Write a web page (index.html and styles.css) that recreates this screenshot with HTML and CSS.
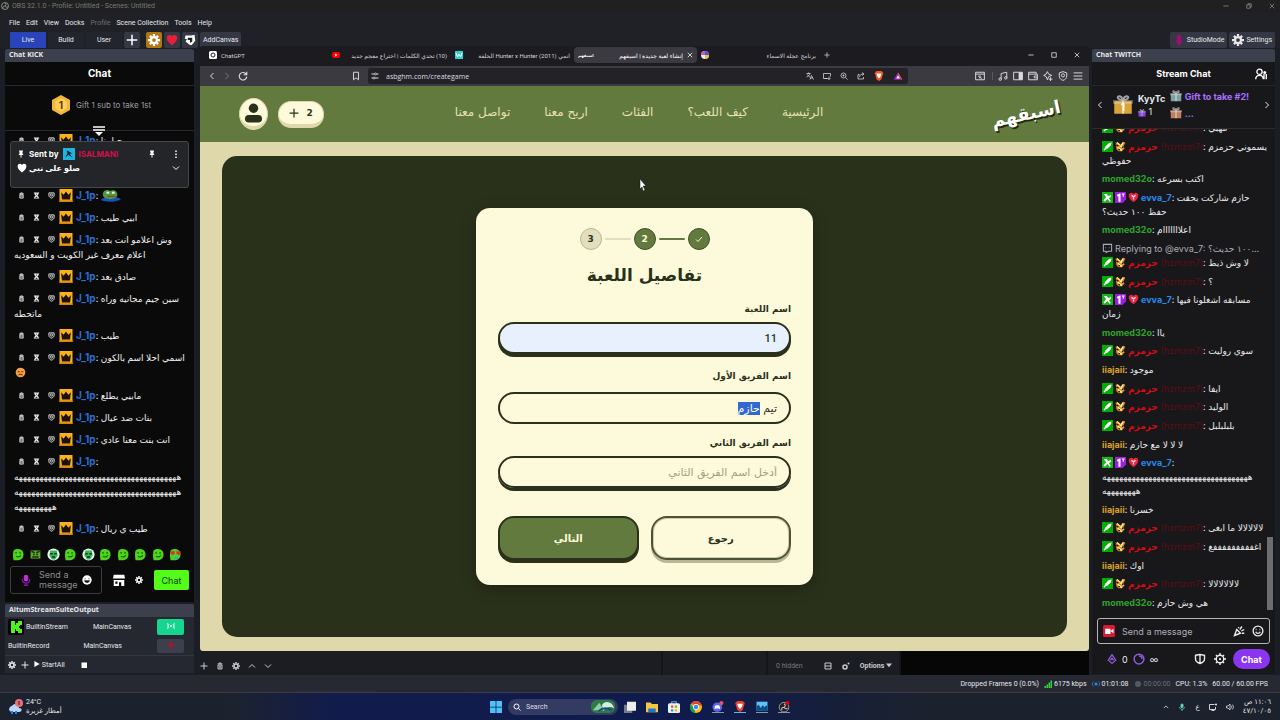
FILE: index.html
```html
<!DOCTYPE html>
<html lang="en">
<head>
    <meta charset="UTF-8">
    <meta name="viewport" content="width=device-width, initial-scale=1.0">
    <title>OBS 32.1.0 - Profile: Untitled - Scenes: Untitled</title>
    <link rel="stylesheet" href="styles.css">
</head>
<body>
    <!-- Shared icons -->
    <svg class="sprite" aria-hidden="true">
        <symbol id="i-trash" viewBox="0 0 16 16"><path d="M3 4h10M6 4V2h4v2M4 6h8v8H4zM6.500 7v6M9.500 7v6" fill="none" stroke="currentColor" stroke-width="1.800"/></symbol>
        <symbol id="i-glass" viewBox="0 0 16 16"><path d="M2 1h12v2h-1c0 3-2 4-3 5 1 1 3 2 3 5h1v2H2v-2h1c0-3 2-4 3-5-1-1-3-2-3-5H2zM6 4l2 2 2-2zM5 13h6L8 10z" fill="currentColor" fill-rule="evenodd"/></symbol>
        <symbol id="i-ban" viewBox="0 0 16 16"><path d="M2 2h12v6c0 3-3 5-6 6-3-1-6-3-6-6z" fill="none" stroke="currentColor" stroke-width="2"/><circle cx="8" cy="7" r="3" fill="none" stroke="currentColor" stroke-width="1.500"/><path d="M6 5l4 4" stroke="currentColor" stroke-width="1.500"/></symbol>
        <symbol id="i-crown" viewBox="0 0 16 16"><path d="M0 0h16v16H0z" fill="#f9b21c"/><path d="M0 14h16v2H0z" fill="#d98408"/><path d="M2 4l3 3 3-4 3 4 3-3-1 9H3z" fill="#1c1200"/></symbol>
        <symbol id="i-sword" viewBox="0 0 16 16"><path d="M0 0h16v16H0z" fill="#00ad03"/><path d="M14 2l-1 4-6 6-1-1-2 3-2-2 3-2-1-1 6-6z" fill="#fff"/></symbol>
        <symbol id="i-mod" viewBox="0 0 16 16"><path d="M0 0h16v16H0z" fill="#14b517"/><path d="M3 3h4l2 3 4-2v3l-3 2 3 4-2 1-3-4-4 4-2-2 4-4z" fill="#fff"/></symbol>
        <symbol id="i-bee" viewBox="0 0 16 16"><path d="M1 2l4 1 3 2 5-4 2 2-3 5 2 3-4 4H5l-3-3z" fill="#d98a20"/><path d="M3 2l4 4M12 2l-3 5M4 9l6 5M7 7l5 4" stroke="#fff0a0" stroke-width="2"/><path d="M2 6l3 1M10 9l2 1M5 12l2 1" stroke="#29120a" stroke-width="2"/></symbol>
        <symbol id="i-first" viewBox="0 0 16 16"><path d="M0 0h16v11l-5 5H0z" fill="#9a20dd"/><path d="M3 4l4-2h1v12H5V6H3z" fill="#fff"/><path d="M10 3h4M12 3v4" stroke="#fff" stroke-width="1.500"/></symbol>
        <symbol id="i-heart" viewBox="0 0 16 16"><path d="M8 15C3 11 1 8 1 5c0-4 5-5 7-2 2-3 7-2 7 2 0 3-2 6-7 10z" fill="currentColor"/></symbol>
        <symbol id="i-gem" viewBox="0 0 16 16"><path d="M8 15C3 11 1 8 1 5c0-4 5-5 7-2 2-3 7-2 7 2 0 3-2 6-7 10z" fill="#e32640"/><path d="M5 5l3 2 3-2M8 6v5" stroke="#ffd8dc" fill="none" stroke-width="2"/></symbol>
        <symbol id="i-gear" viewBox="0 0 16 16"><circle cx="8" cy="8" r="4" fill="none" stroke="currentColor" stroke-width="3"/><path d="M8 0v3M8 13v3M0 8h3M13 8h3M2.500 2.500l2 2M11.500 11.500l2 2M13.500 2.500l-2 2M4.500 11.500l-2 2" stroke="currentColor" stroke-width="3"/></symbol>
        <symbol id="i-plus" viewBox="0 0 16 16"><path d="M8 1v14M1 8h14" stroke="currentColor" stroke-width="2"/></symbol>
        <symbol id="i-x" viewBox="0 0 16 16"><path d="M2 2l12 12M14 2L2 14" stroke="currentColor" stroke-width="2"/></symbol>
        <symbol id="i-min" viewBox="0 0 16 16"><path d="M1 8h14" stroke="currentColor" stroke-width="2"/></symbol>
        <symbol id="i-max" viewBox="0 0 16 16"><path d="M2 2h12v12H2z" fill="none" stroke="currentColor" stroke-width="2"/></symbol>
        <symbol id="i-restore" viewBox="0 0 16 16"><path d="M2 5h9v9H2zM5 5V2h9v9h-3" fill="none" stroke="currentColor" stroke-width="2"/></symbol>
        <symbol id="i-left" viewBox="0 0 16 16"><path d="M11 2L5 8l6 6" fill="none" stroke="currentColor" stroke-width="2"/></symbol>
        <symbol id="i-right" viewBox="0 0 16 16"><path d="M5 2l6 6-6 6" fill="none" stroke="currentColor" stroke-width="2"/></symbol>
        <symbol id="i-up" viewBox="0 0 16 16"><path d="M2 11l6-6 6 6" fill="none" stroke="currentColor" stroke-width="2"/></symbol>
        <symbol id="i-down" viewBox="0 0 16 16"><path d="M2 5l6 6 6-6" fill="none" stroke="currentColor" stroke-width="2"/></symbol>
        <symbol id="i-pin" viewBox="0 0 16 16"><path d="M4 1h8v2h-1v4l2 3H9v5H7v-5H3l2-3V3H4z" fill="currentColor"/></symbol>
        <symbol id="i-smile" viewBox="0 0 16 16"><circle cx="8" cy="8" r="6.500" fill="none" stroke="currentColor" stroke-width="1.800"/><path d="M5 6h1M10 6h1M5 9c1 3 5 3 6 0" fill="none" stroke="currentColor" stroke-width="1.800"/></symbol>
        <symbol id="i-blob" viewBox="0 0 16 16"><path d="M2 3c4-3 11-2 12 3 1 6-3 9-7 9H2c-1-4-1-9 0-12z" fill="#4fd41c"/><path d="M4 6h2M9 6h2M5 10c2 2 4 1 6-1" stroke="#175c05" stroke-width="1.500" fill="none"/></symbol>
        <symbol id="i-blob2" viewBox="0 0 16 16"><circle cx="8" cy="8" r="7.500" fill="#e9f7ee"/><path d="M4 3h8l1 6-3 5H6L3 9z" fill="#35b857"/><path d="M4 7h3M9 7h3M6 11h4" stroke="#14301c" stroke-width="2"/></symbol>
        <symbol id="i-blob3" viewBox="0 0 16 16"><path d="M2 3h12v10H2z" fill="#5da52d"/><path d="M3 4l4 2M13 4L9 6M5 8h2M9 8h2M4 11h8" stroke="#17330c" stroke-width="1.800"/></symbol>
        <symbol id="i-gift" viewBox="0 0 16 16"><path d="M1 5h14v10H1z" fill="currentColor"/><path d="M0 4h16v3H0z" fill="#fff" fill-opacity=".3"/><path d="M8 4v11M8 4C3 4 3 1 5 1s3 3 3 3 1-3 3-3 2 3-3 3" fill="none" stroke="#fff" stroke-opacity=".6" stroke-width="1.500"/></symbol>
    </svg>

    <header class="obs-head">
        <div class="title-bar">
            <svg class="s8" viewBox="0 0 16 16"><circle cx="8" cy="8" r="7" fill="none" stroke="#aaa" stroke-width="1.500"/><path d="M8 2c3 2 2 5 0 6-3 0-5 2-4 5M8 8c2 3 4 3 6 1" fill="none" stroke="#aaa" stroke-width="1.500"/></svg>
            <span>OBS 32.1.0 - Profile: Untitled - Scenes: Untitled</span>
            <div class="win-buttons">
                <button aria-label="Minimize"><svg class="s6"><use href="#i-min"/></svg></button>
                <button aria-label="Restore"><svg class="s6"><use href="#i-restore"/></svg></button>
                <button aria-label="Close"><svg class="s6"><use href="#i-x"/></svg></button>
            </div>
        </div>
        <nav class="menu-bar">
            <button>File</button><button>Edit</button><button>View</button><button>Docks</button><button class="off">Profile</button><button>Scene Collection</button><button>Tools</button><button>Help</button>
        </nav>
        <div class="tool-bar">
            <button class="tab active">Live</button>
            <button class="tab">Build</button>
            <button class="tab">User</button>
            <button class="square" aria-label="Add"><svg class="s12"><use href="#i-plus"/></svg></button>
            <button class="square gold" aria-label="Canvas settings"><svg class="s12"><use href="#i-gear"/></svg></button>
            <button class="square red" aria-label="Support"><svg class="s12"><use href="#i-heart"/></svg></button>
            <button class="square" aria-label="Aitum"><svg class="s12" viewBox="0 0 16 16"><path d="M2 2h8l4-1 1 8-5 6-3-1-5-4 2-3-3-1z" fill="#fff"/><path d="M5 5h6v5l-3 2V8H5z" fill="#20222b"/></svg></button>
            <button class="tool">AddCanvas</button>
            <button class="tool push"><svg class="s12" viewBox="0 0 16 16"><path d="M8 0l4 5-2 2 2 3-4 6-4-6 2-3-2-2z" fill="#a30d72"/></svg>StudioMode</button>
            <button class="tool"><svg class="s12"><use href="#i-gear"/></svg>Settings</button>
        </div>
    </header>

    <main class="desk">
        <!-- Kick chat and stream outputs -->
        <aside class="left-dock">
            <section class="kick">
                <h2 class="dock-title">Chat KICK</h2>
                <h3 class="chat-title">Chat</h3>
                <div class="kick-gift">
                    <svg class="s20" viewBox="0 0 20 20"><path d="M10 0l9 5v10l-9 5-9-5V5z" fill="#f5b63a"/><path d="M10 3l6 4v6l-6 4-6-4V7z" fill="#ffd15c"/><text x="10" y="14" class="medal">1</text></svg>
                    <span>Gift 1 sub to take 1st</span>
                    <svg class="drawer" viewBox="0 0 12 10"><path d="M0 1h12M0 4h12" stroke="#fff" stroke-width="1.500"/><path d="M2 6h8l-4 4z" fill="#fff"/></svg>
                </div>
                <ul class="kick-list cut">
                    <li><svg><use href="#i-trash"/></svg><svg><use href="#i-glass"/></svg><svg><use href="#i-ban"/></svg><svg class="crown"><use href="#i-crown"/></svg><b>J_1p</b>: <bdi>حبايبنا</bdi></li>
                </ul>
                <div class="pinned">
                    <svg class="s8"><use href="#i-pin"/></svg><b>Sent by</b>
                    <svg class="s12" viewBox="0 0 16 16"><path d="M0 0h16v16H0z" fill="#1fb3e0"/><path d="M5 3l7 4-3 1 4 5-6-4-4 4 3-6z" fill="#0b2330"/></svg><b class="pin-user">ISALMANI</b>
                    <svg class="s8 push"><use href="#i-pin"/></svg>
                    <svg class="s8" viewBox="0 0 16 16"><path d="M8 1v3M8 7v3M8 13v3" stroke="#fff" stroke-width="3"/></svg>
                    <p><svg class="s10"><use href="#i-heart"/></svg> <bdi>صلو على نبي</bdi></p>
                    <svg class="s8 push"><use href="#i-down"/></svg>
                </div>
                <ul class="kick-list">
                    <li><svg><use href="#i-trash"/></svg><svg><use href="#i-glass"/></svg><svg><use href="#i-ban"/></svg><svg class="crown"><use href="#i-crown"/></svg><b>J_1p</b>: <svg class="frog" viewBox="0 0 22 14"><path d="M0 12c3-4 15-5 22-1-5 3-15 4-22 1z" fill="#1552c4"/><path d="M2 6c0-5 5-6 8-4 4-2 8 0 8 4s-5 5-8 5-8-1-8-5z" fill="#4f9a41"/><path d="M6 4h3M12 4h3" stroke="#e6f0e0" stroke-width="2"/><path d="M7 8h9" stroke="#8a4a30" stroke-width="1.500"/></svg></li>
                    <li><svg><use href="#i-trash"/></svg><svg><use href="#i-glass"/></svg><svg><use href="#i-ban"/></svg><svg class="crown"><use href="#i-crown"/></svg><b>J_1p</b>: <bdi>ابيي طيب</bdi></li>
                    <li><svg><use href="#i-trash"/></svg><svg><use href="#i-glass"/></svg><svg><use href="#i-ban"/></svg><svg class="crown"><use href="#i-crown"/></svg><b>J_1p</b>: <bdi>وش اعلامو انت بعد</bdi><br><bdi>اعلام معرف غير الكويت و السعوديه</bdi></li>
                    <li><svg><use href="#i-trash"/></svg><svg><use href="#i-glass"/></svg><svg><use href="#i-ban"/></svg><svg class="crown"><use href="#i-crown"/></svg><b>J_1p</b>: <bdi>صادق بعد</bdi></li>
                    <li><svg><use href="#i-trash"/></svg><svg><use href="#i-glass"/></svg><svg><use href="#i-ban"/></svg><svg class="crown"><use href="#i-crown"/></svg><b>J_1p</b>: <bdi>سين جيم مجانيه وراه</bdi><br><bdi>ماتحطه</bdi></li>
                    <li><svg><use href="#i-trash"/></svg><svg><use href="#i-glass"/></svg><svg><use href="#i-ban"/></svg><svg class="crown"><use href="#i-crown"/></svg><b>J_1p</b>: <bdi>طيب</bdi></li>
                    <li><svg><use href="#i-trash"/></svg><svg><use href="#i-glass"/></svg><svg><use href="#i-ban"/></svg><svg class="crown"><use href="#i-crown"/></svg><b>J_1p</b>: <bdi>اسمي احلا اسم بالكون</bdi><br><svg class="sad" viewBox="0 0 16 16"><circle cx="8" cy="8" r="7" fill="#f2a244"/><path d="M4 7h3M9 7h3M5 12c2-2 4-2 6 0" stroke="#6b2f10" stroke-width="1.500" fill="none"/></svg></li>
                    <li><svg><use href="#i-trash"/></svg><svg><use href="#i-glass"/></svg><svg><use href="#i-ban"/></svg><svg class="crown"><use href="#i-crown"/></svg><b>J_1p</b>: <bdi>مابيي يطلع</bdi></li>
                    <li><svg><use href="#i-trash"/></svg><svg><use href="#i-glass"/></svg><svg><use href="#i-ban"/></svg><svg class="crown"><use href="#i-crown"/></svg><b>J_1p</b>: <bdi>بنات ضد عيال</bdi></li>
                    <li><svg><use href="#i-trash"/></svg><svg><use href="#i-glass"/></svg><svg><use href="#i-ban"/></svg><svg class="crown"><use href="#i-crown"/></svg><b>J_1p</b>: <bdi>انت بنت معنا عادي</bdi></li>
                    <li><svg><use href="#i-trash"/></svg><svg><use href="#i-glass"/></svg><svg><use href="#i-ban"/></svg><svg class="crown"><use href="#i-crown"/></svg><b>J_1p</b>:<br><bdi>هههههههههههههههههههههههههههههههههههههههه</bdi><br><bdi>هههههههههههههههههههههههههههههههههههههههه</bdi><br><bdi>هههههههههه</bdi></li>
                    <li><svg><use href="#i-trash"/></svg><svg><use href="#i-glass"/></svg><svg><use href="#i-ban"/></svg><svg class="crown"><use href="#i-crown"/></svg><b>J_1p</b>: <bdi>طيب ي ريال</bdi></li>
                </ul>
                <div class="emotes">
                    <svg><use href="#i-blob"/></svg><svg><use href="#i-blob3"/></svg><svg><use href="#i-blob2"/></svg><svg><use href="#i-blob"/></svg><svg><use href="#i-blob2"/></svg><svg><use href="#i-blob"/></svg><svg><use href="#i-blob"/></svg><svg><use href="#i-blob"/></svg><svg><use href="#i-blob"/></svg><svg viewBox="0 0 16 16"><path d="M2 3c4-3 11-2 12 3 1 6-3 9-7 9H2c-1-4-1-9 0-12z" fill="#4fd41c"/><path d="M2 4h5v3L5 9 2 7zM9 4h5v3l-2 2-3-2z" fill="#d8303a"/><path d="M7 11h4v3H7z" fill="#35a7e0"/></svg>
                </div>
                <div class="kick-send">
                    <div class="kick-box">
                        <svg class="s12" viewBox="0 0 16 16"><rect x="5" y="1" width="6" height="9" rx="3" fill="#c02fd6"/><path d="M3 7c0 7 10 7 10 0M8 12v3M5 15h6" fill="none" stroke="#7d1a9c" stroke-width="1.800"/></svg>
                        <textarea rows="2" aria-label="Send a message" placeholder="Send a message"></textarea>
                        <svg class="s10" viewBox="0 0 16 16"><circle cx="8" cy="8" r="7.500" fill="#fff"/><path d="M4 6h2M10 6h2M4 9h8c-1 4-7 4-8 0z" fill="#111" stroke="#111"/></svg>
                    </div>
                    <svg class="s12" viewBox="0 0 16 16"><path d="M1 1h14l1 5H0zM1 8h14v8h-4v-5H8v5H1zM3 10v3h3v-3z" fill="#fff" fill-rule="evenodd"/></svg>
                    <svg class="s8"><use href="#i-gear"/></svg>
                    <button class="kick-button">Chat</button>
                </div>
            </section>
            <section class="outputs">
                <h2 class="dock-title">AitumStreamSuiteOutput</h2>
                <div class="out-row">
                    <svg class="s16" viewBox="0 0 16 16"><rect width="16" height="16" rx="2" fill="#050505"/><path d="M3 2h4v4h1V4h2V2h4v4h-2v1h-1v2h1v1h2v4h-4v-2H8v-2H7v4H3z" fill="#4df51c"/></svg>
                    <span>BuiltinStream</span><span class="canvas">MainCanvas</span>
                    <button class="on" aria-label="Stop stream"><svg class="s8" viewBox="0 0 16 16"><circle cx="8" cy="8" r="2" fill="#fff"/><path d="M4 4c-2 2-2 6 0 8M12 4c2 2 2 6 0 8M2 2c-3 3-3 9 0 12M14 2c3 3 3 9 0 12" fill="none" stroke="#fff" stroke-width="1.500"/></svg></button>
                </div>
                <div class="out-row">
                    <span class="rec">BuiltinRecord</span><span class="canvas">MainCanvas</span>
                    <button aria-label="Start recording"><svg class="s8" viewBox="0 0 16 16"><circle cx="8" cy="8" r="5" fill="#b0122a"/></svg></button>
                </div>
                <div class="out-tools">
                    <svg class="s8"><use href="#i-gear"/></svg><svg class="s8"><use href="#i-plus"/></svg>
                    <button><svg class="s6" viewBox="0 0 16 16"><path d="M1 0l14 8-14 8z" fill="#fff"/></svg> StartAll</button><svg class="s8" viewBox="0 0 16 16"><path d="M3 3h11v11H3z" fill="#fff"/></svg>
                </div>
            </section>
        </aside>

        <div class="middle">
            <section class="browser">
                <div class="tabs">
                    <div class="btab"><svg class="s8" viewBox="0 0 16 16"><rect width="16" height="16" rx="3" fill="#fff"/><circle cx="8" cy="8" r="4" fill="none" stroke="#222" stroke-width="2"/></svg><span class="en">ChatGPT</span></div>
                    <div class="btab"><svg class="s8" viewBox="0 0 16 16"><rect y="2" width="16" height="12" rx="4" fill="#f00"/><path d="M6 5l5 3-5 3z" fill="#fff"/></svg><span dir="rtl">(10) تحدي الكلمات | اختراع معجم جديد</span></div>
                    <div class="btab"><svg class="s8" viewBox="0 0 16 16"><path d="M0 0h16v16H0z" fill="#2bd4cc"/><path d="M2 4l3 8 3-6 3 6 3-8" fill="none" stroke="#fff" stroke-width="2"/></svg><span dir="rtl">انمي Hunter x Hunter (2011) الحلقة</span></div>
                    <div class="btab current"><span class="mini">اسبقهم</span><span dir="rtl">إنشاء لعبة جديدة | اسبقهم</span><svg class="s6"><use href="#i-x"/></svg></div>
                    <div class="btab"><svg class="s8" viewBox="0 0 16 16"><circle cx="8" cy="8" r="8" fill="#eee"/><path d="M8 8V0a8 8 0 0 1 8 8z" fill="#4a55c9"/><path d="M8 8H0a8 8 0 0 1 8-8z" fill="#c35bb7"/><path d="M8 8v8a8 8 0 0 0 8-8z" fill="#e8c04a"/></svg><span dir="rtl">برنامج عجلة الاسماء</span></div>
                    <button class="new-tab" aria-label="New tab"><svg class="s6"><use href="#i-plus"/></svg></button>
                    <div class="win-buttons light">
                        <button aria-label="Minimize"><svg class="s6"><use href="#i-min"/></svg></button>
                        <button aria-label="Maximize"><svg class="s6"><use href="#i-max"/></svg></button>
                        <button aria-label="Close"><svg class="s6"><use href="#i-x"/></svg></button>
                    </div>
                </div>
                <div class="address">
                    <svg class="s8"><use href="#i-left"/></svg>
                    <svg class="s8 dim"><use href="#i-right"/></svg>
                    <svg class="s10" viewBox="0 0 16 16"><path d="M13 5a6 6 0 1 0 1 4M14 1v5H9" fill="none" stroke="currentColor" stroke-width="1.800"/></svg>
                    <svg class="s10 bookmark" viewBox="0 0 16 16"><path d="M4 2h8v12l-4-3-4 3z" fill="none" stroke="currentColor" stroke-width="1.500"/></svg>
                    <div class="url">
                        <svg class="s8" viewBox="0 0 16 16"><path d="M1 4h6M11 4h4M1 12h3M8 12h7" stroke="currentColor" stroke-width="2"/><circle cx="9" cy="4" r="2" fill="none" stroke="currentColor" stroke-width="1.500"/><circle cx="6" cy="12" r="2" fill="none" stroke="currentColor" stroke-width="1.500"/></svg>
                        <input type="text" aria-label="Address" value="asbghm.com/creategame">
                        <svg class="s8" viewBox="0 0 16 16"><path d="M1 3h8M5 1v2M8 3c-1 4-4 6-7 7M3 5c1 3 3 4 5 5M8 15l3-8 4 8M9 12h4" fill="none" stroke="currentColor" stroke-width="1.500"/></svg>
                        <svg class="s8" viewBox="0 0 16 16"><path d="M9 13H1V3h14v6M3 13h6M12 9v6M9 12l3 3 3-3" fill="none" stroke="currentColor" stroke-width="1.500"/></svg>
                        <svg class="s8" viewBox="0 0 16 16"><circle cx="7" cy="7" r="5" fill="none" stroke="currentColor" stroke-width="1.500"/><path d="M11 11l4 4M5 7h4M7 5v4" stroke="currentColor" stroke-width="1.500"/></svg>
                        <svg class="s8" viewBox="0 0 16 16"><path d="M5 5H2v9h11v-4M5 10c0-4 3-6 8-6M10 1l4 3-4 3" fill="none" stroke="currentColor" stroke-width="1.500"/></svg>
                        <svg class="s10 shield" viewBox="0 0 16 16"><path d="M4 0h8l3 3-1 3-2 7-4 3-4-3L2 6 1 3z" fill="#f0562a"/><path d="M4 4h8l-1 4-3 4-3-4z" fill="#fff"/></svg>
                        <svg class="s10" viewBox="0 0 16 16"><path d="M8 2l7 12H1z" fill="#8a2bd0"/><path d="M8 2l7 12-7-4z" fill="#f0502a"/><path d="M8 7l3 5H5z" fill="#fff"/></svg>
                    </div>
                    <svg class="s10 push" viewBox="0 0 16 16"><path d="M1 2h14v12H1zM1 5h14M5 8l6 4M8 7v5" fill="none" stroke="currentColor" stroke-width="1.500"/></svg>
                    <i></i>
                    <svg class="s10" viewBox="0 0 16 16"><path d="M5 13V4l9-2v9" fill="none" stroke="currentColor" stroke-width="1.500"/><circle cx="3.500" cy="13" r="2" fill="none" stroke="currentColor" stroke-width="1.500"/><circle cx="12.500" cy="11" r="2" fill="none" stroke="currentColor" stroke-width="1.500"/></svg>
                    <svg class="s10" viewBox="0 0 16 16"><path d="M1 2h14v12H1z" fill="none" stroke="currentColor" stroke-width="1.500"/><path d="M9 2h6v12H9z" fill="currentColor"/></svg>
                    <svg class="s10" viewBox="0 0 16 16"><path d="M1 2h12v3h2v9H1zM1 5h12M15 8h-5v3h5" fill="none" stroke="currentColor" stroke-width="1.500"/></svg>
                    <svg class="s10" viewBox="0 0 16 16"><path d="M7 1l2 4 5 2-5 2-2 5-2-5-4-2 4-2zM12 10v6M9 13h6" fill="none" stroke="currentColor" stroke-width="1.500"/></svg>
                    <svg class="s10" viewBox="0 0 16 16"><path d="M8 1l6 2v5c0 4-3 6-6 7-3-1-6-3-6-7V3z" fill="none" stroke="currentColor" stroke-width="1.500"/><circle cx="8" cy="7" r="2.500" fill="none" stroke="currentColor" stroke-width="1.500"/></svg>
                    <svg class="s10" viewBox="0 0 16 16"><path d="M1 3h14M1 8h14M1 13h14" stroke="currentColor" stroke-width="1.500"/></svg>
                </div>

                <div class="page" lang="ar" dir="rtl">
                    <header class="site-head">
                        <a class="logo" href="#">اسبقهم</a>
                        <nav class="site-nav">
                            <a href="#">الرئيسية</a><a href="#">كيف اللعب؟</a><a href="#">الفئات</a><a href="#">اربح معنا</a><a href="#">تواصل معنا</a>
                        </nav>
                        <div class="account">
                            <button class="coins"><span>2</span><svg class="s10"><use href="#i-plus"/></svg></button>
                            <button class="avatar" aria-label="الحساب"><svg viewBox="0 0 20 20"><circle cx="10" cy="5" r="5" fill="#2a311b"/><rect x="1" y="12" width="18" height="8" rx="4" fill="#2a311b"/></svg></button>
                        </div>
                    </header>
                    <div class="stage">
                        <form class="card">
                            <ol class="steps">
                                <li class="done"><svg class="s8" viewBox="0 0 16 16"><path d="M2 9l4 4 8-9" fill="none" stroke="#fdf9db" stroke-width="2"/></svg></li>
                                <li class="bar done"></li>
                                <li class="done">2</li>
                                <li class="bar"></li>
                                <li>3</li>
                            </ol>
                            <h1>تفاصيل اللعبة</h1>
                            <label for="game">اسم اللعبة</label>
                            <input class="field filled" id="game" type="text" value="11">
                            <label for="team1">اسم الفريق الأول</label>
                            <input class="field pressed" id="team1" type="text" value="تيم حازم">
                            <label for="team2">اسم الفريق الثاني</label>
                            <input class="field" id="team2" type="text" placeholder="أدخل اسم الفريق الثاني">
                            <div class="actions">
                                <button type="button" class="back">رجوع</button>
                                <button type="button" class="next">التالي</button>
                            </div>
                        </form>
                        <svg class="cursor" viewBox="0 0 8 12"><path d="M1 0l6 7H4l2 4-2 1-1-4-2 2z" fill="#fff" stroke="#111" stroke-width=".5"/></svg>
                    </div>
                </div>
            </section>
            <div class="scene-tools">
                <div class="group">
                    <svg class="s8"><use href="#i-plus"/></svg><svg class="s8"><use href="#i-trash"/></svg><svg class="s8"><use href="#i-gear"/></svg><svg class="s8"><use href="#i-up"/></svg><svg class="s8"><use href="#i-down"/></svg>
                </div>
                <div class="group mid"></div>
                <div class="group last">
                    <span>0 hidden</span><svg class="s8" viewBox="0 0 16 16"><path d="M2 2h12v12H2zM2 8h12" fill="none" stroke="currentColor" stroke-width="2"/></svg><svg class="s8" viewBox="0 0 16 16"><circle cx="6" cy="10" r="4" fill="none" stroke="currentColor" stroke-width="3"/><circle cx="13" cy="3" r="2" fill="currentColor"/></svg><button>Options <svg class="s6" viewBox="0 0 16 16"><path d="M0 4h16l-8 10z" fill="currentColor"/></svg></button>
                </div>
                <div class="black"></div>
            </div>
        </div>

        <!-- Twitch chat -->
        <aside class="twitch">
            <h2 class="dock-title">Chat TWITCH</h2>
            <h3 class="chat-title">Stream Chat
                <svg class="s12" viewBox="0 0 16 16"><circle cx="6" cy="5" r="3.500" fill="none" stroke="#fff" stroke-width="1.800"/><path d="M1 15c0-7 10-7 10 0M12 8v7M15 8v7" fill="none" stroke="#fff" stroke-width="1.800"/><circle cx="13" cy="6" r="2" fill="#fff"/></svg>
            </h3>
            <div class="leaders">
                <svg class="s8"><use href="#i-left"/></svg>
                <svg class="s20 gold-gift" viewBox="0 0 20 20"><use href="#i-gift"/><text x="10" y="16" class="rank">1</text></svg>
                <div><b>KyyTc</b><br><svg class="s8 violet"><use href="#i-gift"/></svg> 1</div>
                <div class="purple"><svg class="s12 silver"><use href="#i-gift"/></svg> <b>Gift to take #2!</b><br><svg class="s12 bronze"><use href="#i-gift"/></svg> <b>...</b></div>
                <svg class="s8"><use href="#i-right"/></svg>
            </div>
            <div class="twitch-chat">
                <ul>
                    <li><svg><use href="#i-sword"/></svg><svg><use href="#i-bee"/></svg><b class="r">حزمزم</b> <span class="r">(hzmzm7)</span>: <bdi>مهبي</bdi></li>
                    <li><svg><use href="#i-sword"/></svg><svg><use href="#i-bee"/></svg><b class="r">حزمزم</b> <span class="r">(hzmzm7)</span>: <bdi>يسموني حزمزم</bdi><br><bdi>حفوظي</bdi></li>
                    <li><b class="g">momed32o</b>: <bdi>اكتب بسرعه</bdi></li>
                    <li><svg><use href="#i-mod"/></svg><svg><use href="#i-first"/></svg><svg><use href="#i-gem"/></svg><b class="b">evva_7</b>: <bdi>حازم شاركت بحقت</bdi><br><bdi>حفظ ١٠٠ حديث؟</bdi></li>
                    <li><b class="g">momed32o</b>: <bdi>اعلااااااام</bdi></li>
                    <li><span class="reply"><svg viewBox="0 0 16 16"><path d="M2 2h12v10H9l-3 2v-2H2zM5 7h1M10 7h1" fill="none" stroke="currentColor" stroke-width="1.500"/></svg>Replying to @evva_7: <bdi>١٠٠ حديث؟</bdi>...</span><br><svg><use href="#i-sword"/></svg><svg><use href="#i-bee"/></svg><b class="r">حزمزم</b> <span class="r">(hzmzm7)</span>: <bdi>لا وش ذيظ</bdi></li>
                    <li><svg><use href="#i-sword"/></svg><svg><use href="#i-bee"/></svg><b class="r">حزمزم</b> <span class="r">(hzmzm7)</span>: <bdi>؟</bdi></li>
                    <li><svg><use href="#i-mod"/></svg><svg><use href="#i-first"/></svg><svg><use href="#i-gem"/></svg><b class="b">evva_7</b>: <bdi>مسابقه اشغلونا فيها</bdi><br><bdi>زمان</bdi></li>
                    <li><b class="g">momed32o</b>: <bdi>ياا</bdi></li>
                    <li><svg><use href="#i-sword"/></svg><svg><use href="#i-bee"/></svg><b class="r">حزمزم</b> <span class="r">(hzmzm7)</span>: <bdi>سوي روليت</bdi></li>
                    <li><b class="y">iiajaii</b>: <bdi>موجود</bdi></li>
                    <li><svg><use href="#i-sword"/></svg><svg><use href="#i-bee"/></svg><b class="r">حزمزم</b> <span class="r">(hzmzm7)</span>: <bdi>ايفا</bdi></li>
                    <li><svg><use href="#i-sword"/></svg><svg><use href="#i-bee"/></svg><b class="r">حزمزم</b> <span class="r">(hzmzm7)</span>: <bdi>الوليد</bdi></li>
                    <li><svg><use href="#i-sword"/></svg><svg><use href="#i-bee"/></svg><b class="r">حزمزم</b> <span class="r">(hzmzm7)</span>: <bdi>بلبلبلبل</bdi></li>
                    <li><b class="y">iiajaii</b>: <bdi>لا لا لا مع حازم</bdi></li>
                    <li><svg><use href="#i-mod"/></svg><svg><use href="#i-first"/></svg><svg><use href="#i-gem"/></svg><b class="b">evva_7</b>:<br><bdi>هههههههههههههههههههههههههههههههههههه</bdi><br><bdi>ههههههههه</bdi></li>
                    <li><b class="y">iiajaii</b>: <bdi>خسرنا</bdi></li>
                    <li><svg><use href="#i-sword"/></svg><svg><use href="#i-bee"/></svg><b class="r">حزمزم</b> <span class="r">(hzmzm7)</span>: <bdi>لالالالالا ما ابغى</bdi></li>
                    <li><svg><use href="#i-sword"/></svg><svg><use href="#i-bee"/></svg><b class="r">حزمزم</b> <span class="r">(hzmzm7)</span>: <bdi>اغفففففففففغ</bdi></li>
                    <li><b class="y">iiajaii</b>: <bdi>اوك</bdi></li>
                    <li><svg><use href="#i-sword"/></svg><svg><use href="#i-bee"/></svg><b class="r">حزمزم</b> <span class="r">(hzmzm7)</span>: <bdi>لالالالالالا</bdi></li>
                    <li><b class="g">momed32o</b>: <bdi>هي وش حازم</bdi></li>
                </ul>
                <div class="scroll"><span></span></div>
            </div>
            <div class="twitch-box">
                <svg class="s12" viewBox="0 0 16 16"><rect width="16" height="16" rx="2" fill="#d61a35"/><path d="M3 5h7v7H3zM10 8l4-3v6z" fill="#fff"/></svg>
                <input type="text" aria-label="Send a message" placeholder="Send a message">
                <svg class="s12" viewBox="0 0 16 16"><path d="M2 14l3-8 5 5zM9 6l3-4M11 8l4-2M12 11h3M7 3l1 1" fill="none" stroke="#eee" stroke-width="1.800"/></svg>
                <svg class="s12"><use href="#i-smile"/></svg>
            </div>
            <div class="twitch-foot">
                <svg class="s10" viewBox="0 0 16 16"><path d="M8 1l6 9-6 5-6-5z" fill="none" stroke="#8d5bd8" stroke-width="2"/><path d="M8 5l4 5H4z" fill="#8d5bd8"/></svg><span>0</span>
                <svg class="s12" viewBox="0 0 16 16"><circle cx="8" cy="8" r="6.500" fill="none" stroke="#8d5bd8" stroke-width="2"/><path d="M8 4a4 4 0 0 1 4 4" fill="none" stroke="#8d5bd8" stroke-width="2"/></svg><span>∞</span>
                <svg class="s12 push" viewBox="0 0 16 16"><path d="M2 3l6-1 6 1v5c0 3-3 5-6 6-3-1-6-3-6-6zM8 2v12" fill="none" stroke="#eee" stroke-width="1.800"/></svg>
                <svg class="s12" viewBox="0 0 16 16"><circle cx="8" cy="8" r="5" fill="none" stroke="#eee" stroke-width="1.800"/><circle cx="8" cy="8" r="1.500" fill="#eee"/><path d="M8 0v3M8 13v3M0 8h3M13 8h3M2.500 2.500l2 2M11.500 11.500l2 2M13.500 2.500l-2 2M4.500 11.500l-2 2" stroke="#eee" stroke-width="1.800"/></svg>
                <button>Chat</button>
            </div>
        </aside>
    </main>

    <footer class="status">
        <span>Dropped Frames 0 (0.0%)</span>
        <span><svg class="s8" viewBox="0 0 16 16"><path d="M1 16v-4h3v4zM5 16V9h3v7zM9 16V5h3v11zM13 16V1h3v15z" fill="#35d43c"/></svg>6175 kbps</span>
        <span><svg class="s8" viewBox="0 0 16 16"><circle cx="8" cy="8" r="3" fill="#2f8ce6"/><path d="M3 3c-3 3-3 7 0 10M13 3c3 3 3 7 0 10" fill="none" stroke="#2f6cae" stroke-width="2"/></svg>01:01:08</span>
        <span class="off"><svg class="s8" viewBox="0 0 16 16"><circle cx="8" cy="8" r="6" fill="#555962"/></svg>00:00:00</span>
        <span>CPU: 1.3%</span>
        <span>60.00 / 60.00 FPS</span>
    </footer>

    <footer class="taskbar">
        <div class="weather">
            <svg class="s16" viewBox="0 0 16 16"><path d="M1 11c0-4 4-4 5-6 3 0 5 2 5 4 4 0 3 4 0 4H3z" fill="#b9d6f7"/><path d="M4 12v3M8 12v3" stroke="#2f7be8" stroke-width="2"/><circle cx="11" cy="4" r="4" fill="#e8707c"/><path d="M11 2v4" stroke="#4a1218"/></svg>
            <p>24°C<br><bdi>أمطار غزيرة</bdi></p>
        </div>
        <div class="apps">
            <svg class="s12" viewBox="0 0 16 16"><path d="M0 0h7.500v7.500H0zM8.500 0H16v7.500H8.500zM0 8.500h7.500V16H0zM8.500 8.500H16V16H8.500z" fill="#4fc3f7"/></svg>
            <label class="search"><svg class="s8" viewBox="0 0 16 16"><circle cx="7" cy="7" r="5" fill="none" stroke="#fff" stroke-width="2"/><path d="M11 11l4 4" stroke="#fff" stroke-width="2"/></svg><input type="search" placeholder="Search" aria-label="Search"><svg class="art" viewBox="0 0 26 14"><rect width="26" height="14" rx="6" fill="#2f7a4a"/><path d="M2 11L9 3l5 8z" fill="#8fd0a0"/><path d="M12 5c4-6 12-2 13 4-5-3-9-1-12 3z" fill="#d6efe4"/><path d="M8 12c6-5 10-3 15-1" stroke="#1a4d7a" stroke-width="2" fill="none"/></svg></label>
            <svg class="s12" viewBox="0 0 16 16"><path d="M0 5h11v11H0z" fill="#777d88"/><path d="M4 1h12v12H4z" fill="#ededed"/></svg>
            <svg class="s12" viewBox="0 0 16 16"><path d="M0 2h6l2 2h8v11H0z" fill="#f6c544"/><path d="M3 10h10v5H3z" fill="#1e78c8"/></svg>
            <svg class="s12" viewBox="0 0 16 16"><path d="M5 4V1h6v3" fill="none" stroke="#5aa7e0" stroke-width="1.500"/><rect y="3" width="16" height="13" rx="2" fill="#eee"/><path d="M4 6h3v3H4z" fill="#f25022"/><path d="M9 6h3v3H9z" fill="#7fba00"/><path d="M4 11h3v3H4z" fill="#00a4ef"/><path d="M9 11h3v3H9z" fill="#ffb900"/></svg>
            <svg class="s12" viewBox="0 0 16 16"><circle cx="8" cy="8" r="8" fill="#f4c20d"/><path d="M1 4a8 8 0 0 1 14 0l1 2H8z" fill="#db4437"/><path d="M1 4l5 7 1 5A8 8 0 0 1 1 4z" fill="#0f9d58"/><circle cx="8" cy="8" r="4" fill="#fff"/><circle cx="8" cy="8" r="3" fill="#4285f4"/></svg>
            <svg class="s12 run" viewBox="0 0 16 16"><circle cx="7" cy="9" r="7" fill="#5865f2"/><path d="M3 12c0-6 1-6 4-6s4 0 4 6l-2-1H5z" fill="#fff"/><circle cx="13" cy="3" r="3" fill="#f0505a"/></svg>
            <svg class="s12 run focus" viewBox="0 0 16 16"><path d="M4 0h8l3 3-1 3-2 7-4 3-4-3L2 6 1 3z" fill="#e8402a"/><path d="M4 4h8l-1 4-3 4-3-4z" fill="#fff"/></svg>
            <svg class="s12 run" viewBox="0 0 16 16"><path d="M0 1h16v13H0z" fill="#5fc1f5"/><path d="M0 14V8l3-3 3 5 3-4 3 3 2-3 2 2v6z" fill="#0b4f86"/></svg>
            <svg class="s12 run" viewBox="0 0 16 16"><circle cx="8" cy="9" r="7" fill="#222" stroke="#ccc"/><path d="M8 4c3 2 2 4 0 5-3 0-4 2-3 4M8 9c2 3 4 3 5 1" fill="none" stroke="#ccc" stroke-width="1.500"/><circle cx="13" cy="3" r="3" fill="#e00"/></svg>
        </div>
        <div class="tray">
            <svg class="s6"><use href="#i-up"/></svg>
            <svg class="s8" viewBox="0 0 16 16"><rect x="5" y="1" width="6" height="9" rx="3" fill="#5fd0c0"/><path d="M3 8c0 6 10 6 10 0M8 12v4" fill="none" stroke="#5fd0c0" stroke-width="1.500"/></svg>
            <span>ع</span>
            <svg class="s8" viewBox="0 0 16 16"><path d="M11 3H1v10h12V8M5 15h6" fill="none" stroke="currentColor" stroke-width="1.800"/><circle cx="14" cy="3" r="2" fill="currentColor"/></svg>
            <svg class="s8" viewBox="0 0 16 16"><path d="M1 6h3l4-4v12l-4-4H1zM10 5c2 2 2 4 0 6M12 3c4 3 4 7 0 10" fill="none" stroke="currentColor" stroke-width="1.500"/></svg>
            <p><bdi>١١:٠٦ ص</bdi><br>٤٧/١٠/٠٥</p>
        </div>
    </footer>
    <script>
        // Select the team name that is being edited
        const equipo = document.getElementById('team1');
        equipo.focus();
        equipo.setSelectionRange(4, 8);
    </script>
</body>
</html>
```

FILE: styles.css
```css
* {
    box-sizing: border-box;
}
body {
    margin: 0;
    height: 100vh;
    display: flex;
    flex-direction: column;
    overflow: hidden;
    font-family: Roboto, "DejaVu Sans", sans-serif;
    font-size: 7px;
    color: #e8e8ea;
    background-color: #1c1e26;
}
h1, h2, h3, p, ul, ol {
    margin: 0;
    padding: 0;
    list-style: none;
}
button, input, textarea {
    font: inherit;
    color: inherit;
    background: none;
    border: none;
    padding: 0;
    margin: 0;
    outline: none;
}
button {
    cursor: pointer;
    white-space: nowrap;
}
a {
    text-decoration: none;
}
svg {
    flex: none;
}
.sprite {
    position: absolute;
    width: 0;
    height: 0;
}
.s6 { width: 6px; height: 6px; }
.s8 { width: 8px; height: 8px; }
.s10 { width: 10px; height: 10px; }
.s12 { width: 12px; height: 12px; }
.s16 { width: 16px; height: 16px; }
.s20 { width: 20px; height: 20px; }
.push {
    margin-left: auto;
}

/* OBS header */
.obs-head {
    height: 48px;
    background-color: #1f2127;
}
.title-bar {
    height: 12px;
    display: flex;
    align-items: center;
    gap: 3px;
    padding: 0 5px 0 1px;
    color: #77787c;
    background-color: #202020;
}
.win-buttons {
    display: flex;
    gap: 17px;
    margin-left: auto;
    color: #8d8d90;
}
.win-buttons.light {
    color: #eee;
}
.win-buttons button, .new-tab {
    display: flex;
}
.menu-bar {
    display: flex;
    gap: 6px;
    height: 20px;
    align-items: center;
    padding: 2px 9px 0;
}
.off {
    color: #6b6d74;
}
.tool-bar {
    display: flex;
    gap: 2px;
    height: 16px;
    padding: 0 5px 0 10px;
}
.tab {
    width: 36px;
    background-color: #22252e;
}
.tab.active {
    background-color: #2944b8;
}
.square {
    width: 16px;
    display: flex;
    align-items: center;
    justify-content: center;
    background-color: #353844;
    border-radius: 2px;
    color: #fff;
}
.square.gold {
    margin-left: 4px;
    background-color: #b07814;
}
.square.red {
    color: #e81e3a;
}
.tool {
    display: flex;
    align-items: center;
    gap: 2px;
    padding: 0 3px;
    background-color: #353844;
    border-radius: 2px;
}
.tool.push {
    margin-left: auto;
}

.desk {
    flex: 1;
    min-height: 0;
    display: grid;
    grid-template-columns: 200px 1fr 191px;
}
.dock-title {
    height: 13px;
    line-height: 12px;
    padding-left: 4px;
    font-family: "Open Sans", sans-serif;
    font-size: 7px;
    font-weight: 700;
    background-color: #3c3f4c;
    border-radius: 2px 2px 0 0;
}
.chat-title {
    position: relative;
    height: 24px;
    line-height: 23px;
    text-align: center;
    font-family: Inter, sans-serif;
    font-size: 9px;
    font-weight: 700;
    color: #fff;
    border-bottom: 1px solid #26272b;
}

/* Kick */
.left-dock {
    display: flex;
    flex-direction: column;
    gap: 2px;
    min-height: 0;
    padding: 1px 6px 2px 5px;
}
.kick {
    flex: 1;
    min-height: 0;
    display: flex;
    flex-direction: column;
    background-color: #0a0a0b;
    font-family: Inter, "DejaVu Sans", sans-serif;
}
.kick-gift {
    position: relative;
    z-index: 1;
    height: 45px;
    display: flex;
    align-items: center;
    gap: 5px;
    padding: 0 46px 6px;
    font-size: 8px;
    white-space: nowrap;
    color: #9b9ca0;
    border-bottom: 1px solid #26272b;
}
.kick .chat-title {
    font-size: 10px;
}
.medal {
    font-size: 10px;
    font-weight: 700;
    text-anchor: middle;
    fill: #5c3a05;
}
.drawer {
    position: absolute;
    left: 88px;
    bottom: -6px;
    width: 12px;
    height: 10px;
}
.pinned {
    flex: none;
    height: 47px;
    display: flex;
    flex-wrap: wrap;
    align-items: center;
    align-content: flex-start;
    gap: 3px 4px;
    margin: 0 5px;
    padding: 6px 8px 6px 6px;
    font-size: 8px;
    color: #fff;
    background-color: #232528;
    border: 1px solid #45474b;
    border-radius: 3px;
}
.pinned .s8.push + .s8 {
    margin-left: 12px;
}
.pin-user {
    color: #d0104c;
}
.pinned p {
    display: flex;
    align-items: center;
    gap: 2px;
    font-weight: 700;
}
.kick-list {
    flex: 1;
    min-height: 0;
    display: flex;
    flex-direction: column;
    justify-content: space-between;
    padding: 0 5px 5px 9px;
    font-size: 9px;
    line-height: 15px;
    white-space: nowrap;
    color: #f0f0f0;
}
.kick-list.cut {
    flex: none;
    height: 10px;
    padding-top: 2px;
    padding-bottom: 0;
    justify-content: flex-start;
    overflow: hidden;
}
.kick-list svg {
    width: 7px;
    height: 9px;
    margin: 0 4px;
    vertical-align: -1px;
}
.kick-list .crown {
    width: 14px;
    height: 13px;
    margin: 0 3px 0 0;
    vertical-align: -3px;
}
.kick-list .frog {
    width: 20px;
    height: 13px;
    margin: 0;
    vertical-align: -3px;
}
.kick-list .sad {
    width: 11px;
    height: 11px;
    margin: 0 1px;
    vertical-align: -2px;
}
.kick-list b {
    font-size: 10px;
    color: #2b6fd6;
}
.emotes {
    display: flex;
    justify-content: space-between;
    padding: 7px 12px 5px 7px;
}
.emotes svg {
    width: 13px;
    height: 13px;
}
.kick-send {
    display: flex;
    align-items: center;
    justify-content: space-between;
    padding: 0 5px 8px;
    color: #fff;
}
.kick-box {
    width: 92px;
    height: 28px;
    display: flex;
    align-items: center;
    gap: 1px;
    padding: 0 9px;
    border: 1px solid #3c3d40;
    border-radius: 3px;
}
.kick-box textarea {
    flex: 1;
    min-width: 0;
    height: 20px;
    margin-left: 6px;
    resize: none;
    overflow: hidden;
    font-size: 9px;
    line-height: 10px;
}
.kick-box textarea::placeholder {
    color: #8b8c90;
}
.kick-button {
    width: 35px;
    height: 20px;
    font-size: 9px;
    color: #123806;
    background-color: #53fc18;
    border-radius: 2px;
}

/* Outputs */
.outputs {
    background-color: #252831;
}
.out-row {
    height: 19px;
    display: flex;
    align-items: center;
    gap: 2px;
    padding: 0 10px 0 3px;
}
.out-row .canvas {
    flex: 1;
    padding-left: 23px;
}
.out-row .rec + .canvas {
    padding-left: 32px;
}
.out-row button {
    width: 27px;
    height: 14px;
    background-color: #3c3f4c;
    border-radius: 2px;
}
.out-row .on {
    height: 16px;
    background-color: #16d68f;
}
.out-tools {
    height: 18px;
    display: flex;
    align-items: center;
    gap: 5px;
    padding: 0 3px;
    border-top: 1px solid #343741;
}
.out-tools button {
    margin-right: 10px;
}

/* Browser */
.middle {
    min-width: 0;
    display: flex;
    flex-direction: column;
}
.browser {
    flex: 1;
    min-height: 0;
    display: flex;
    flex-direction: column;
    margin-top: -2px;
    overflow: hidden;
    border-radius: 3px;
    background-color: #1c1b20;
}
.tabs {
    height: 20px;
    display: flex;
    align-items: center;
    padding: 0 9px 2px 5px;
    font-size: 6px;
    color: #d2d2d6;
}
.btab {
    flex: 0 1 123px;
    min-width: 0;
    height: 16px;
    display: flex;
    align-items: center;
    gap: 4px;
    padding: 0 4px;
    overflow: hidden;
    white-space: nowrap;
}
.btab span {
    flex: 1;
}
.btab .mini {
    flex: none;
    font-size: 4px;
    font-weight: 700;
}
.btab.current {
    color: #fff;
    background-color: #3b3a40;
    border-radius: 4px;
}
.new-tab {
    margin-left: 4px;
}
.address {
    height: 20px;
    display: flex;
    align-items: center;
    gap: 7px;
    padding: 0 6px 0 8px;
    color: #dcdce0;
    background-color: #3b3a40;
}
.address .dim {
    color: #77767d;
}
.bookmark {
    margin-left: 96px;
}
.url {
    flex: 0 1 540px;
    height: 16px;
    display: flex;
    align-items: center;
    gap: 9px;
    padding: 0 5px 0 3px;
    background-color: #232227;
    border-radius: 3px;
}
.url input {
    flex: 1;
    min-width: 0;
    font-family: "Open Sans", sans-serif;
}
.url svg:first-child {
    margin-right: -2px;
}
.address i {
    width: 1px;
    height: 8px;
    background-color: #5a5960;
}
.address .push ~ svg {
    margin-left: -2px;
}

/* Game site */
.page {
    flex: 1;
    min-height: 0;
    display: flex;
    flex-direction: column;
    font-family: "DejaVu Sans", sans-serif;
    color: #2a311b;
    background-color: #dfd8ab;
}
.site-head {
    height: 56px;
    display: grid;
    grid-template-columns: 1fr auto 1fr;
    align-items: center;
    padding: 0 28px 0 39px;
    background-color: #637a3f;
}
.logo {
    justify-self: start;
    font-size: 18px;
    font-weight: 700;
    line-height: 30px;
    color: #fff;
    text-shadow: 1px 2px 0 #1f2912;
    transform: rotate(-12deg);
}
.site-nav {
    display: flex;
    gap: 34px;
    margin-right: 22px;
    padding-bottom: 5px;
    font-size: 12px;
}
.site-nav a {
    color: #e6e0b0;
}
.account {
    display: flex;
    align-items: center;
    justify-content: flex-end;
    gap: 10px;
}
.coins {
    width: 46px;
    height: 27px;
    display: flex;
    align-items: center;
    justify-content: center;
    gap: 7px;
    font-size: 9px;
    font-weight: 700;
    background-color: #fdf9db;
    border: 1px solid #dfd8ab;
    border-bottom-width: 4px;
    border-radius: 13px;
}
.avatar {
    width: 29px;
    height: 32px;
    background-color: #fdf9db;
    border: 1px solid #dfd8ab;
    border-bottom-width: 4px;
    border-radius: 50%;
}
.avatar svg {
    display: block;
    width: 19px;
    height: 20px;
    margin: auto;
}
.stage {
    position: relative;
    flex: 1;
    min-height: 0;
    display: flex;
    align-items: center;
    justify-content: center;
    margin: 14px 22px;
    background-color: #2a311b;
    border-radius: 15px;
}
.cursor {
    position: absolute;
    left: 417px;
    top: 23px;
    width: 8px;
    height: 12px;
}
.card {
    width: 337px;
    padding: 20px 22px 22px;
    display: flex;
    flex-direction: column;
    background-color: #fdf9db;
    border-radius: 14px;
    box-shadow: 0 4px 16px rgba(0, 0, 0, 0.3);
}
.steps {
    display: flex;
    align-items: center;
    justify-content: center;
    gap: 3px;
}
.steps li {
    width: 22px;
    height: 22px;
    display: flex;
    align-items: center;
    justify-content: center;
    font-size: 9px;
    font-weight: 700;
    background-color: #e2dfbe;
    border: 1px solid #b9b795;
    border-radius: 50%;
}
.steps .done {
    color: #fdf9db;
    background-color: #637a3f;
    border-color: #3f4f27;
}
.steps .bar {
    width: 26px;
    height: 2px;
    border: none;
    border-radius: 1px;
}
.card h1 {
    margin: 12px 0 13px;
    font-size: 17px;
    line-height: 26px;
    text-align: center;
}
.card label {
    margin-bottom: 5px;
    font-size: 9px;
    font-weight: 700;
    line-height: 16px;
}
.field {
    height: 32px;
    margin-bottom: 14px;
    padding: 0 12px;
    font-size: 11px;
    border: 2px solid #2a311b;
    border-radius: 16px;
    box-shadow: 0 3px 0 #2a311b;
}
.field.filled {
    font-family: Roboto, sans-serif;
    font-weight: 500;
    background-color: #e8f0fe;
}
.field.pressed {
    box-shadow: none;
    transform: translateY(3px);
}
.field::placeholder {
    color: #a3a085;
}
.field::selection {
    color: #fff;
    background-color: #3367d1;
}
.actions {
    display: grid;
    grid-template-columns: 1fr 1fr;
    gap: 12px;
    margin-top: 14px;
}
.actions button {
    height: 44px;
    margin-bottom: 3px;
    font-size: 10px;
    font-weight: 700;
    border: 2px solid #2a311b;
    border-radius: 16px;
    box-shadow: 0 3px 0 #2a311b;
}
.actions .back {
    border-color: #4c5139;
    box-shadow: 0 3px 0 #b9b795, inset 0 0 0 1px #cfccab;
}
.actions .next {
    color: #fdf9db;
    background-color: #637a3f;
}

.scene-tools {
    height: 24px;
    display: flex;
    gap: 2px;
    color: #c9cacd;
    background-color: #14151a;
}
.group {
    display: flex;
    align-items: center;
    background-color: #1b1d22;
    padding-top: 6px;
}
.group:first-child {
    flex: 1;
    gap: 8px;
}
.group.mid {
    width: 103px;
}
.group.last {
    width: 131px;
    gap: 10px;
    padding-left: 8px;
}
.group.last span {
    flex: 1;
    color: #77787d;
}
.group.last button {
    padding-right: 7px;
    font-weight: 700;
}
.black {
    width: 188px;
    background-color: #060607;
}

/* Twitch */
.twitch {
    min-width: 0;
    min-height: 0;
    display: flex;
    flex-direction: column;
    margin: 1px 5px 1px 3px;
    background-color: #18181b;
    font-family: Inter, "DejaVu Sans", sans-serif;
}
.chat-title svg {
    position: absolute;
    right: 8px;
    top: 6px;
}
.leaders {
    height: 43px;
    display: flex;
    align-items: center;
    gap: 5px;
    padding: 0 4px 4px;
    font-size: 9px;
    line-height: 13px;
    white-space: nowrap;
    border-bottom: 1px solid #2c2c30;
}
.leaders > svg:first-child {
    margin-right: 4px;
}
.leaders > svg:last-child {
    margin-left: auto;
}
.leaders div svg {
    vertical-align: -2px;
}
.rank {
    font-size: 10px;
    font-weight: 700;
    text-anchor: middle;
    fill: #fff;
}
.gold-gift { color: #d9a53a; }
.violet { color: #8a45e0; }
.silver { color: #7fa0a0; }
.bronze { color: #c08060; }
.purple {
    color: #a970ff;
    line-height: 17px;
}
.twitch-chat {
    flex: 1;
    min-height: 0;
    display: flex;
    overflow: hidden;
}
.twitch-chat ul {
    flex: 1;
    min-width: 0;
    display: flex;
    flex-direction: column;
    justify-content: space-between;
    margin-top: -8px;
    padding: 0 0 4px 10px;
    font-size: 9px;
    line-height: 14px;
    white-space: nowrap;
}
.twitch-chat ul svg {
    width: 11px;
    height: 11px;
    margin-right: 2px;
    vertical-align: -2px;
}
.r { color: #d80a16; }
span.r { color: #5c0d14; }
.g { color: #2fa52b; }
.b { color: #2a87f0; }
.y { color: #d6a02a; }
.reply {
    color: #adadb8;
}
.scroll {
    width: 8px;
    display: flex;
    align-items: flex-end;
    padding-bottom: 4px;
}
.scroll span {
    width: 6px;
    height: 73px;
    background-color: #6d6d70;
}
.twitch-box {
    height: 26px;
    display: flex;
    align-items: center;
    gap: 7px;
    margin: 4px 5px 0;
    padding: 0 5px;
    border: 1px solid #b5b5b8;
    border-radius: 3px;
}
.twitch-box input {
    flex: 1;
    min-width: 0;
    font-size: 9px;
}
.twitch-box input::placeholder {
    color: #adadb8;
}
.twitch-foot {
    height: 30px;
    display: flex;
    align-items: center;
    gap: 5px;
    padding: 0 5px 0 15px;
    font-size: 9px;
}
.twitch-foot .push + svg {
    margin: 0 2px 0 3px;
}
.twitch-foot button {
    width: 37px;
    height: 20px;
    font-weight: 700;
    color: #fff;
    background-color: #8a35f0;
    border-radius: 10px;
}

/* Status and taskbar */
.status {
    height: 18px;
    display: flex;
    align-items: center;
    justify-content: flex-end;
    gap: 5px;
    padding-right: 12px;
    background-color: #262932;
    border-bottom: 1px solid #3a3d45;
}
.status span {
    display: flex;
    align-items: center;
    gap: 2px;
}
.taskbar {
    height: 27px;
    display: grid;
    grid-template-columns: 1fr auto 1fr;
    align-items: center;
    background: linear-gradient(90deg, #1c222d 18%, #111c4c 26%, #0f1b4c 55%, #1b212d 72%);
}
.taskbar p {
    line-height: 9px;
}
.weather, .tray, .apps {
    display: flex;
    align-items: center;
}
.weather {
    gap: 2px;
    padding-left: 8px;
}
.apps {
    gap: 10px;
}
.search {
    width: 110px;
    height: 16px;
    display: flex;
    align-items: center;
    gap: 5px;
    padding: 0 3px 0 5px;
    margin: 0 -4px;
    background-color: #333b63;
    border-radius: 8px;
}
.search input {
    flex: 1;
    min-width: 0;
}
.search input::placeholder {
    color: #dcdde4;
}
.art {
    width: 24px;
    height: 13px;
}
.run {
    border-bottom: 1px solid #8d93a8;
}
.run.focus {
    border-color: #5ab8f0;
}
.tray {
    justify-content: flex-end;
    gap: 9px;
    padding-right: 9px;
    text-align: right;
}
```
